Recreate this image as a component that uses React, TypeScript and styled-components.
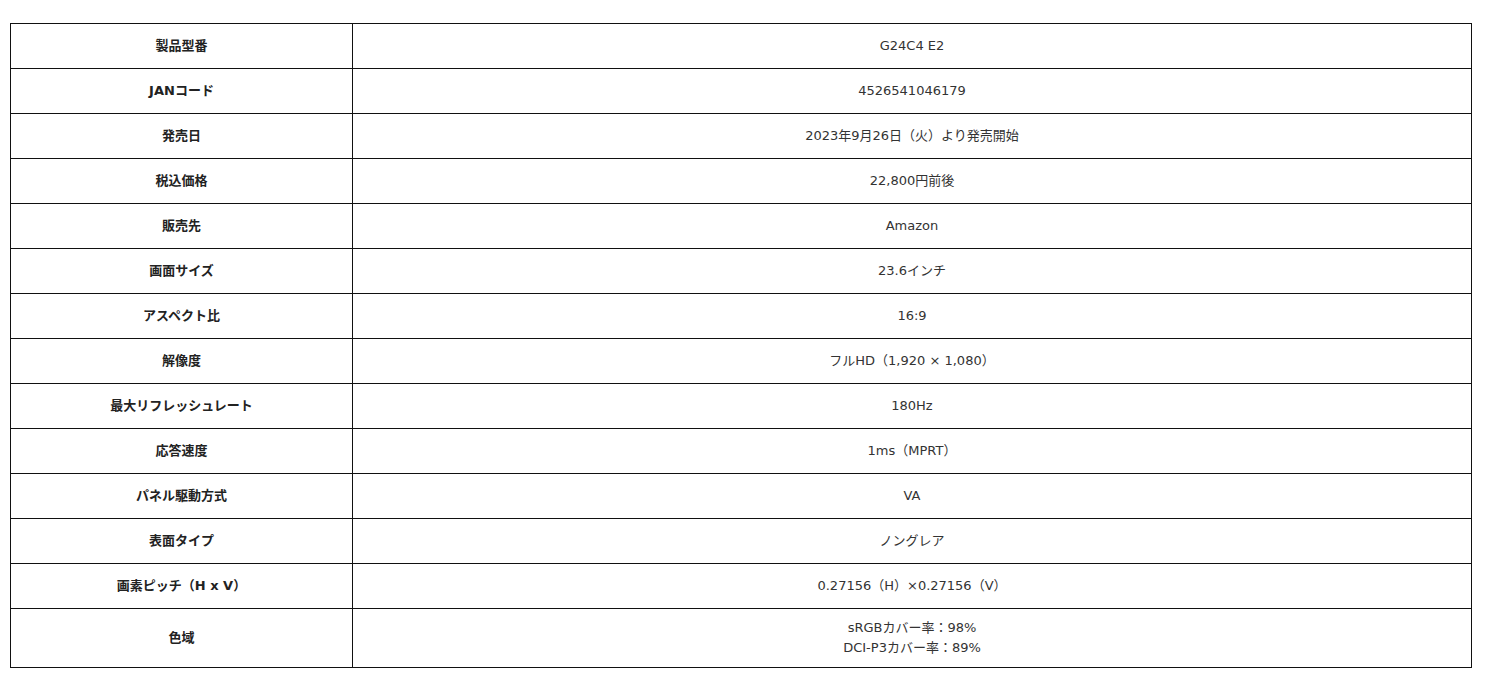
import React, { ReactElement } from 'react';
import styled, { createGlobalStyle } from 'styled-components';

const GlobalStyle = createGlobalStyle`
  body {
    margin: 0;
    background: #ffffff;
    font-family: 'DejaVu Sans', 'Noto Sans CJK JP', sans-serif;
    color: #333333;
  }
`;

const Page = styled.div`
  padding: 23px 13px 0 10px;
`;

const SpecTable = styled.table`
  width: 1462px;
  border-collapse: collapse;
  table-layout: fixed;
  font-size: 13px;
  line-height: 20px;
`;

const Row = styled.tr`
  height: 45px;
`;

const Label = styled.th`
  box-sizing: border-box;
  width: 342px;
  border: 1px solid #111111;
  padding: 9px 8px;
  font-weight: 700;
  color: #222222;
  text-align: center;
  vertical-align: middle;
`;

const Value = styled.td`
  border: 1px solid #111111;
  padding: 9px 8px;
  text-align: center;
  vertical-align: middle;
  color: #333333;
`;

type Spec = { label: string; value: string[] };

const specs: Spec[] = [
  { label: '製品型番', value: ['G24C4 E2'] },
  { label: 'JANコード', value: ['4526541046179'] },
  { label: '発売日', value: ['2023年9月26日（火）より発売開始'] },
  { label: '税込価格', value: ['22,800円前後'] },
  { label: '販売先', value: ['Amazon'] },
  { label: '画面サイズ', value: ['23.6インチ'] },
  { label: 'アスペクト比', value: ['16:9'] },
  { label: '解像度', value: ['フルHD（1,920 × 1,080）'] },
  { label: '最大リフレッシュレート', value: ['180Hz'] },
  { label: '応答速度', value: ['1ms（MPRT）'] },
  { label: 'パネル駆動方式', value: ['VA'] },
  { label: '表面タイプ', value: ['ノングレア'] },
  { label: '画素ピッチ（H x V）', value: ['0.27156（H）×0.27156（V）'] },
  { label: '色域', value: ['sRGBカバー率：98%', 'DCI-P3カバー率：89%'] },
];

const App = (): ReactElement => {
  return (
    <Page>
      <GlobalStyle />
      <SpecTable>
        <tbody>
          {specs.map((spec) => (
            <Row key={spec.label}>
              <Label>{spec.label}</Label>
              <Value>
                {spec.value.map((line, i) => (
                  <React.Fragment key={line}>
                    {i > 0 && <br />}
                    {line}
                  </React.Fragment>
                ))}
              </Value>
            </Row>
          ))}
        </tbody>
      </SpecTable>
    </Page>
  );
};

export default App;
